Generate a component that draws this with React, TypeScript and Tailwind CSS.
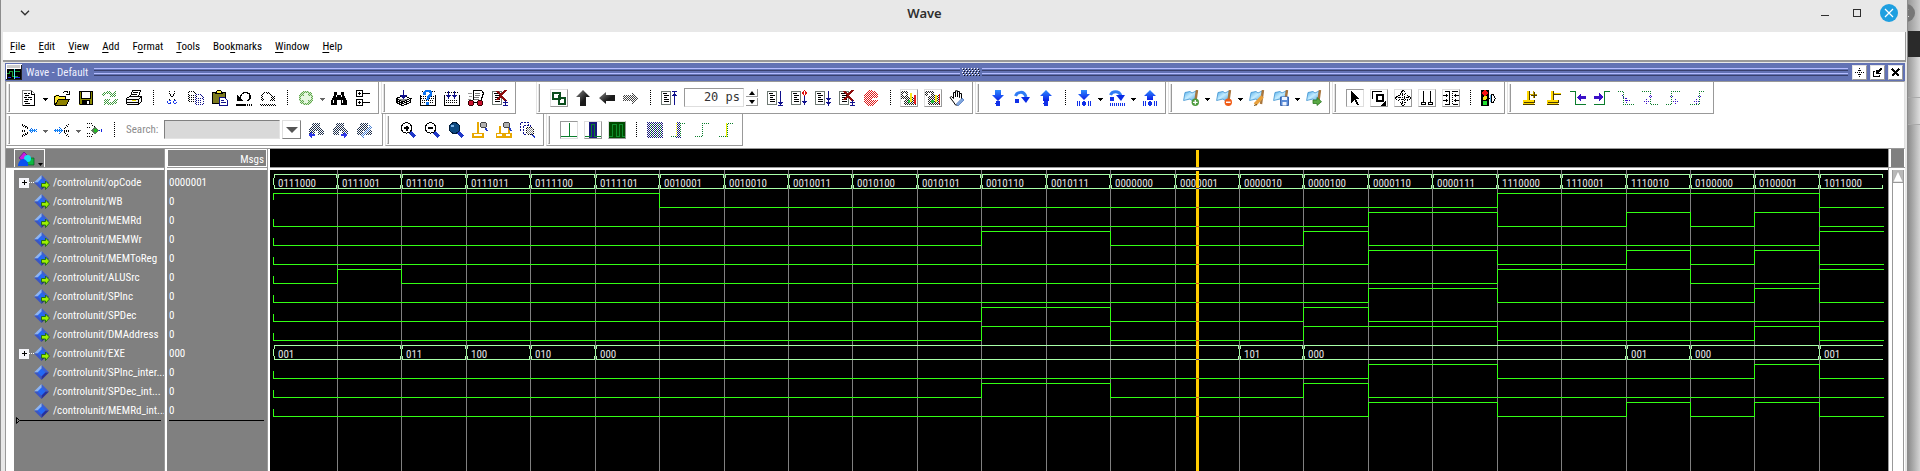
import React from 'react';

type Kids = { children?: React.ReactNode };

const FONT = "font-['Liberation_Sans_Narrow','Roboto_Condensed','Liberation_Sans',sans-serif]";

/* ---------- icon helpers ---------- */

const Svg = ({ children }: Kids) => (
  <svg viewBox="0 0 16 16" className="size-4 shrink-0" shapeRendering="crispEdges" fill="none">
    {children}
  </svg>
);
const L = ({ d, c = '#000', w = 1, f = 'none', dash }: { d: string; c?: string; w?: number; f?: string; dash?: string }) => (
  <path d={d} stroke={c} strokeWidth={w} fill={f} strokeDasharray={dash} />
);
const F = ({ d, c = '#000' }: { d: string; c?: string }) => <path d={d} fill={c} />;
const Dim = ({ children }: Kids) => <g mask="url(#dither)">{children}</g>;

const DARK_BLUE = '#10108c';
const GREEN = '#0a7d2c';

const SharedDefs = () => (
  <svg className="absolute size-0" aria-hidden="true">
    <defs>
      <pattern id="checker" width="2" height="2" patternUnits="userSpaceOnUse">
        <rect width="1" height="1" fill="#fff" />
        <rect x="1" y="1" width="1" height="1" fill="#fff" />
      </pattern>
      <mask id="dither" maskUnits="userSpaceOnUse" x="0" y="0" width="16" height="16">
        <rect width="16" height="16" fill="url(#checker)" />
      </mask>
      <linearGradient id="blueArrow" x1="0" y1="0" x2="0" y2="1">
        <stop offset="0" stopColor="#2f8cff" />
        <stop offset="1" stopColor="#0a1ee6" />
      </linearGradient>
      <linearGradient id="darkArrow" x1="0" y1="0" x2="1" y2="1">
        <stop offset="0" stopColor="#8a8a8a" />
        <stop offset=".6" stopColor="#1a1a1a" />
      </linearGradient>
      <linearGradient id="flag" x1="0" y1="0" x2="1" y2="1">
        <stop offset="0" stopColor="#4aa8e8" />
        <stop offset=".5" stopColor="#c4ecff" />
        <stop offset="1" stopColor="#58a8e0" />
      </linearGradient>
    </defs>
  </svg>
);

const Lines = ({ x = 0 }: { x?: number }) => (
  <g transform={`translate(${x} 0)`}>
    <L d="M.5 1.5H9.5V14.5H.5Z" c="#6f7a74" />
    <L d="M2 3.500H6M3 5.500H8M3 7.500H6M3 9.500H8M3 11.500H8" />
  </g>
);

const icons: Record<string, React.ReactNode> = {
  new: (
    <>
      <L d="M1.5 .5H10.5L13.5 3.5V15.5H1.5Z" c="#8a8a8a" />
      <L d="M10.5 1V4.5H13.5M13.5 4V15.5H2" />
      <L d="M3 3.5H6M7 3.5H9M4 5.5H8M3 7.5H6M7 7.5H11M4 9.5H8M9 9.5H11M3 11.5H7M4 13.5H9" />
    </>
  ),
  open: (
    <>
      <F d="M1 5H5V6H11V9H16L12 15H1Z" c="#ffe92e" />
      <F d="M4 9H16L12 15H1Z" c="#8d8100" />
      <L d="M.5 15V6.5H1.5L2.5 5.5H4.5L5.5 6.5H11.5V9M1 15.5H12L15.5 9.5H4.5L1 15M8.5 3.5L10.5 1.5H13L14.5 3.5M12 4.5H15.5V1" />
    </>
  ),
  save: (
    <>
      <F d="M1 1H15V15H1Z" c="#8b8a00" />
      <F d="M4 1H12V8H4Z" c="#fff" />
      <F d="M4 10H12V15H4Z" />
      <F d="M9 11H11V14H9Z" c="#fff" />
      <L d="M1.5 1.5H14.5V14.5H2.5L1.5 13.5Z" />
      <L d="M3.5 2V8.5H12.5V2" />
    </>
  ),
  refresh: (
    <Dim>
      <L d="M1 6C3 2 7 1 10 4M15 9C13 14 9 15 5 12" c="#3f9a3f" w={3} />
      <F d="M7 7H14V0ZM9 9H2V16Z" c="#3f9a3f" />
    </Dim>
  ),
  print: (
    <>
      <L d="M4.5 6.5L6.5 .5H14.5L12.5 6.5" f="#fff" />
      <L d="M7 2.5H12M6 4.5H11" />
      <L d="M.5 8.5L3.5 6.5H15.5V11.5L12.5 14.5H1.5L.5 13.5Z" f="#f4f4f4" />
      <L d="M.5 9.5H12.5L15.5 7M12.5 9.5V14M1 12.5H12" />
      <L d="M6 10.5H10" c="#e6d800" />
    </>
  ),
  cut: (
    <>
      <L d="M5.5 1V4L10.5 10M10.5 1V4L5.5 10" dash="1 1" />
      <L d="M4.5 10.5H6.5V13.5H3.5V11.5ZM9.5 10.5H11.5L12.5 13.5H9.5Z" c="#1838e8" dash="2 1" />
    </>
  ),
  copy: (
    <Dim>
      <L d="M0 1.5H6L8.5 4.5V11.5H.5ZM1 5.5H6M1 7.5H6M1 9.5H6" w={1.6} />
      <L d="M7.5 4.5H12L15.5 8.5V14.5H7.5ZM8 8.5H14M8 10.5H14M8 12.5H14" c={DARK_BLUE} w={1.6} />
    </Dim>
  ),
  paste: (
    <>
      <L d="M.5 2.5H13.5V13.5H.5Z" f="#7c7a1e" />
      <L d="M3.5 3.5L5.5 .5H8.5L10.5 3.5Z" f="#ffee44" />
      <L d="M7.5 7.5H12.5L15.5 10.5V15.5H7.5Z" c={DARK_BLUE} f="#fff" />
      <L d="M9 10.5H12M9 12.5H14" c={DARK_BLUE} />
    </>
  ),
  undo: (
    <>
      <L d="M4 7.5C5 3.5 8 2.5 10.5 2.5C15 3.5 15.5 9.5 11.5 10.5" w={1.4} />
      <F d="M1 5V11H7Z" />
      <L d="M0 14.5H10" w={2} />
      <L d="M11 14.5H16" w={2} dash="1 1" />
    </>
  ),
  redo: (
    <Dim>
      <L d="M12 7.5C11 3.5 8 2.5 5.5 2.5C1 3.5 .5 9.5 4.5 10.5" w={1.8} />
      <F d="M15 5V11H9Z" />
      <L d="M0 14.5H16" w={2} />
    </Dim>
  ),
  add: (
    <>
      <circle cx="8" cy="8" r="7.4" fill="#cfe8c8" />
      <Dim>
        <circle cx="8" cy="8" r="7.4" fill="#5fa84a" />
      </Dim>
      <F d="M6 3H10V6H13V10H10V13H6V10H3V6H6Z" c="#e6f7e0" />
    </>
  ),
  find: (
    <>
      <F d="M3 2H6V5H10V2H13V5L16 11V15H10V10H6V15H0V11L3 5Z" />
      <L d="M2.5 10V13M5.5 5V7M11.5 10V13M10.5 5V7" c="#fff" />
    </>
  ),
  tree: (
    <>
      <L d="M1.5 .5H7.5V6.5H1.5ZM1.5 9.5H7.5V15.5H1.5ZM8 3.5H15M8 12.5H15" />
      <L d="M3 3.5H6M4.5 2V5M3 12.5H6M4.5 11V14" />
    </>
  ),
  stack: (
    <>
      <L d="M.5 8.5L7 5.5L14.5 8.5L6.5 12Z" f="#fff" />
      <L d="M.5 10.5L6.5 13.5L14.5 10.5M.5 12.5L6.5 15.5L14.5 12.5M.5 9V13M14.5 9V13" />
      <L d="M3 9.5H11M5 10.5H9" c="#888" />
      <L d="M7.5 0V8" c={DARK_BLUE} w={1.4} />
      <F d="M4 5H11L7.5 9Z" c={DARK_BLUE} />
    </>
  ),
  help: (
    <>
      <L d="M.5 5V15.5H15.5V5" />
      <L d="M2 12.500H14M2 10.500H14" dash="1 1" />
      <L d="M1 6.5H15M1 8.5H15M2 1.5H15" dash="1 1" />
      <L d="M4.5 5V3C5 0 11 0 11 3.5C11 6 7.5 6 7.5 10" c="#0a72f0" w={2.6} />
      <F d="M6 12H9V15H6Z" c="#0a72f0" />
    </>
  ),
  compileAll: (
    <>
      <L d="M.5 5V15.5H15.5V5" />
      <L d="M2 10.5H14M2 12.5H14M1 2.5H15" dash="1 1" />
      <L d="M4.5 1V7M10.5 1V7" c={DARK_BLUE} />
      <F d="M2 5H7L4.5 9ZM8 5H13L10.5 9Z" c={DARK_BLUE} />
    </>
  ),
  simulate: (
    <>
      <L d="M5.5 .5H13.5L15.5 3L12.5 12H4.5L5.5 8Z" f="#fff" />
      <L d="M7 3.5H12M7 5.5H12M6 7.5H11M6 9.5H11" c="#777" />
      <L d="M0 3.5H4M1 6.5H4M0 9.5H3" c="#999" />
      <circle cx="3" cy="13" r="2.6" fill="#c8102e" stroke="#300" />
      <circle cx="12" cy="13" r="2.6" fill="#c8102e" stroke="#300" />
    </>
  ),
  breakRun: (
    <>
      <Lines />
      <L d="M5 1L14 11M14 0L5 10" c="#8c0c0c" w={2} />
      <L d="M13.5 10V15M11 15.5H16M11 12.5H16" c={DARK_BLUE} />
    </>
  ),
  layers: (
    <>
      <path d="M2 2.5H9V8.5H2ZM7.5 7.5H14V13.5H7.5Z" stroke="#0a4d1c" strokeWidth="2" />
      <L d="M5 8L11 8M7.5 5V11" c="#0a4d1c" />
    </>
  ),
  up: <path d="M8 0L15 7H11V16H5V7H1Z" fill="url(#darkArrow)" shapeRendering="auto" />,
  left: <path d="M0 8L7 2V5H16V11H7V14Z" fill="url(#darkArrow)" shapeRendering="auto" />,
  right: (
    <Dim>
      <F d="M16 8L9 2V5H0V11H9V14Z" c="#444" />
    </Dim>
  ),
  restart: (
    <>
      <Lines />
      <L d="M13.5 3V15M11 1.5H16M11 5.5H16" c={DARK_BLUE} />
      <F d="M11 6L13.5 2L16 6Z" c={DARK_BLUE} />
    </>
  ),
  run: (
    <>
      <Lines />
      <L d="M13.5 1V15M11 15.5H16" c={DARK_BLUE} />
      <F d="M11 12H16L13.5 15Z" c={DARK_BLUE} />
    </>
  ),
  runNext: (
    <>
      <Lines />
      <L d="M13.5 .5L15.5 3L13.5 5.5L11.5 3Z" c="#e01010" />
      <L d="M13.5 6V15" c={DARK_BLUE} />
      <F d="M11 11H16L13.5 15Z" c={DARK_BLUE} />
    </>
  ),
  runAll: (
    <>
      <Lines />
      <L d="M13.5 1V15" c={DARK_BLUE} />
      <F d="M11 8H16L13.5 11ZM11 12H16L13.5 16Z" c={DARK_BLUE} />
    </>
  ),
  stop: (
    <Dim>
      <path d="M5 1H10L14 4V7H8V10H14V12L10 15H5L1 11V5Z" fill="#e01a1a" />
      <path d="M5 1H10L14 4V7H8V10H14V12L10 15H5L1 11V5Z" stroke="#e01a1a" strokeWidth="1" />
    </Dim>
  ),
  mem: (
    <>
      <Dim>
        <F d="M0 1H7V9H0ZM4 7H15V15H3Z" c="#222" />
      </Dim>
      <L d="M9.5 3V12" c="#f5ea1a" w={2} />
      <L d="M13.5 5V14" c="#e81c1c" w={2} />
      <F d="M7 10H9V13H7Z" c="#20c040" />
      <F d="M2 3H5V6H2Z" c="#fff" />
    </>
  ),
  profile: (
    <>
      <Dim>
        <F d="M0 1H9V6H0ZM3 5H15V15H3Z" c="#222" />
      </Dim>
      <L d="M10.5 5V12" c="#f5ea1a" w={2} />
      <L d="M14.5 4V14" c="#e81c1c" />
      <F d="M6 10H9V13H6Z" c="#20c040" />
      <F d="M3 3H6V6H3Z" c="#fff" />
    </>
  ),
  hand: (
    <>
      <path d="M4.5 12L1 7.5L2.5 6.5L4.5 8.5V2.5H6.5V7V.8H8.5V7V1.5H10.5V7.5V3.5H12.5V10L11 13L9 15H6.5Z" fill="#fff" stroke="#000" shapeRendering="auto" />
      <path d="M7 14L13 8L15 10L9 16Z" fill="#7fa6de" stroke="#5c7fc0" strokeWidth=".6" />
    </>
  ),
  stepInto: (
    <>
      <path d="M5 0H11V5H14L8 11L2 5H5Z" fill="url(#blueArrow)" shapeRendering="auto" />
      <circle cx="8" cy="13.5" r="2.5" fill="#1030e8" />
    </>
  ),
  stepOver: (
    <>
      <path d="M1.5 6C3 2 10 0 12 7" stroke="#2f7cf5" strokeWidth="3" shapeRendering="auto" />
      <path d="M7 7H16L12 13Z" fill="#0a2be6" shapeRendering="auto" />
      <circle cx="3" cy="11" r="2.4" fill="#1030e8" />
    </>
  ),
  stepOut: (
    <>
      <path d="M8 0L14 6H11V11H5V6H2Z" fill="url(#blueArrow)" shapeRendering="auto" />
      <circle cx="8" cy="13.5" r="2.5" fill="#1030e8" />
    </>
  ),
  stepIntoInst: (
    <>
      <path d="M5 0H11V4H14L8 10L2 4H5Z" fill="url(#blueArrow)" shapeRendering="auto" />
      <circle cx="8" cy="13.5" r="2.3" fill="#1030e8" />
      <L d="M1.5 11V16M3.5 11V16M12.5 11V16M14.5 11V16" c="#1030e8" />
    </>
  ),
  stepOverInst: (
    <>
      <path d="M1.5 5C3 1 10 0 12 6" stroke="#2f7cf5" strokeWidth="3" shapeRendering="auto" />
      <path d="M7 5H16L12 11Z" fill="#0a2be6" shapeRendering="auto" />
      <circle cx="3" cy="9" r="2.4" fill="#1030e8" />
      <L d="M1 14.5H16" c="#1030e8" w={3} dash="1 1" />
    </>
  ),
  stepOutInst: (
    <>
      <path d="M8 0L14 6H11V10H5V6H2Z" fill="url(#blueArrow)" shapeRendering="auto" />
      <circle cx="8" cy="13.5" r="2.3" fill="#1030e8" />
      <L d="M1.5 11V16M3.5 11V16M12.5 11V16M14.5 11V16" c="#1030e8" />
    </>
  ),
  selectArrow: <F d="M4 1L12 9H9L12 15H10L7.5 10L5 12L4 13Z" />,
  zoomBox: (
    <>
      <L d="M1.5 9V1.5H11" w={1.4} />
      <path d="M5.5 5H11.500V11H5.5Z" stroke="#000" strokeWidth="2" />
      <F d="M15 10V16H9Z" />
    </>
  ),
  pan: (
    <>
      <L d="M7.500 1V15M1 7.500H15" dash="1 1" />
      <L d="M9.500 4V12M4 9.500H12" dash="1 1" />
      <L d="M5 4L8 .5L11 4ZM5 12L8 15.5L11 12ZM4 5L.5 8L4 11ZM12 5L15.5 8L12 11Z" dash="1 1" />
    </>
  ),
  twoCursors: <L d="M4.5 1V11.5M11.5 1V11.5M2.5 12.5H6.5V14.5H2.5ZM9.5 12.5H13.5V14.5H9.5Z" />,
  edgePair: (
    <>
      <L d="M2 1.5H6.5V14.5H2M14.5 1.5H10M14.5 14.5H10" />
      <L d="M9.5 1V15" dash="1 1" />
      <L d="M0 5.5H5M0 10.5H5M11 5.5H16M11 10.5H16M3.500 4V7M3.500 9V12M12.500 4V7M12.500 9V12" />
    </>
  ),
  traffic: (
    <>
      <F d="M0 0H8V16H0Z" />
      <circle cx="4" cy="3" r="2.6" fill="#f81010" />
      <circle cx="4" cy="8" r="2" fill="#f6e71c" />
      <circle cx="4" cy="13" r="2.2" fill="#20e030" />
      <L d="M8 8.5H10M10.5 4.5H12L14.5 8.5L12 12.5H10.5Z" />
      <L d="M9.5 5V12" c="#6ab8f0" />
    </>
  ),
  cursorAdd: (
    <>
      <L d="M6 1V11" c="#ffd800" w={2} />
      <L d="M7.500 1V11" c="#4a3c00" />
      <F d="M1 10H12V14H1Z" c="#ffd800" />
      <L d="M2 12.500H12.500V10M1 14.500H12.500" c="#4a3c00" />
      <L d="M8 4.500H15M11.500 1V8" c="#c8a400" />
      <L d="M9 5.500H15M12.500 2V8" c="#4a3c00" />
    </>
  ),
  cursorDel: (
    <>
      <L d="M6 1V11" c="#ffd800" w={2} />
      <L d="M7.500 1V11" c="#4a3c00" />
      <F d="M1 10H12V14H1Z" c="#ffd800" />
      <L d="M2 12.500H12.500V10M1 14.500H12.500" c="#4a3c00" />
      <L d="M8 3.500H15" c="#ffd800" />
      <L d="M8 4.500H15" c="#4a3c00" />
    </>
  ),
  prevFall: (
    <>
      <L d="M0 1.5H5.5V14.5H16" c={GREEN} w={1.4} />
      <F d="M7 7L11 3V6H16V9H11V12Z" c="#3a10c8" />
    </>
  ),
  nextRise: (
    <>
      <L d="M0 14.5H10.5V1.5H16" c={GREEN} w={1.4} />
      <F d="M9 7L5 3V6H0V9H5V12Z" c="#3a10c8" />
    </>
  ),
  edge1: (
    <>
      <L d="M0 1.5H5.5V14.5H16" c={GREEN} dash="1 1" />
      <L d="M4 5.5L6 7.5L8 9.5M8.5 8V13M7 10.5H12" c="#3a10c8" dash="1 1" />
    </>
  ),
  edge2: (
    <>
      <L d="M0 1.5H8.5V14.5H16" c={GREEN} dash="1 1" />
      <L d="M2 11.5H8M4.5 9V14M7 6.5H11M8.5 5V9" c="#3a10c8" dash="1 1" />
    </>
  ),
  edge3: (
    <>
      <L d="M0 14.5H5.5V1.5H15" c={GREEN} dash="1 1" />
      <L d="M4 6.5H8M7 11.5H12M9.5 9V14" c="#3a10c8" dash="1 1" />
    </>
  ),
  edge4: (
    <>
      <L d="M0 14.5H9.5V1.5H15" c={GREEN} dash="1 1" />
      <L d="M8 6.5H12M4 11.5H9M6.5 9V14" c="#3a10c8" dash="1 1" />
    </>
  ),
  zoomIn: (
    <>
      <L d="M10 10L15 15" c="#2038c8" w={3} />
      <circle cx="6.5" cy="6" r="5.2" fill="#fff" stroke="#000" />
      <L d="M4 6H9M6.5 3.5V8.5" w={2} />
    </>
  ),
  zoomOut: (
    <>
      <L d="M10 10L15 15" c="#2038c8" w={3} />
      <circle cx="6.5" cy="6" r="5.2" fill="#fff" stroke="#000" />
      <L d="M4 6H9" w={2} />
    </>
  ),
  zoomFull: (
    <>
      <L d="M10 10L15 15" c="#2038c8" w={3} />
      <circle cx="6.5" cy="6" r="5.4" fill="#0d4a82" stroke="#001c3a" />
      <F d="M3 3H6V5H3Z" c="#7db4e8" />
    </>
  ),
  zoomCursor: (
    <>
      <L d="M5.5 0V11" c="#e8a800" w={2} />
      <L d="M1 11.5H11V15H1Z" c="#e8a800" w={1.6} f="#fff" />
      <L d="M13 5L15 9" c="#2038c8" w={2} />
      <circle cx="11.5" cy="3" r="3" fill="#b0b0b0" stroke="#444" />
    </>
  ),
  zoomTwo: (
    <>
      <L d="M3.5 4V11M12.5 3V11" c="#e8a800" w={2} />
      <L d="M.5 11.5H7V15H.5ZM9 11.5H15V15H9Z" c="#e8a800" w={1.6} f="#fff" />
      <L d="M13 5L15 9" c="#2038c8" w={2} />
      <circle cx="10.5" cy="3" r="3" fill="#b0b0b0" stroke="#444" />
    </>
  ),
  zoomRegion: (
    <>
      <L d="M.5 .5H8.5V3M.5 .5V10M3.5 3.5H10V6M3.5 3.5V12H7" c={DARK_BLUE} dash="2 1" />
      <L d="M12 12L15 15.5" c="#2038c8" w={1.6} />
      <Dim>
        <circle cx="10" cy="9" r="4" fill="#888" stroke="#000" />
      </Dim>
    </>
  ),
  fmtLine: <L d="M8.5 1V15M0 14.5H16" c={GREEN} />,
  fmtPulse: (
    <>
      <F d="M4 0H12V16H4Z" c="#17187c" />
      <L d="M0 14.5H6.5V2.5H9.5V14.5H16" c={GREEN} w={1.4} />
    </>
  ),
  fmtFull: (
    <>
      <F d="M0 0H16V16H0Z" c="#004a00" />
      <L d="M0 14.5H3.5V2.5H7.5V14.5H10.5V2.5H13.5V14.5H16" c="#0f8f2c" w={1.4} />
    </>
  ),
  expand1: (
    <Dim>
      <F d="M0 0H16V16H0Z" c="#17187c" />
      <L d="M3.500 15V2.500H6.500V15M10.500 15V2.500H13.500V15" c={GREEN} />
    </Dim>
  ),
  expand2: (
    <>
      <Dim>
        <F d="M5 0H10V16H5Z" c="#17187c" />
      </Dim>
      <L d="M5.5 1V15" c="#f0f000" dash="1 1" />
      <L d="M0 14.5H5M9.5 14V1.5H15" c={GREEN} dash="1 1" />
    </>
  ),
  expand3: <L d="M0 14.5H7.5V1.5H15" c={GREEN} dash="1 1" />,
  expand4: (
    <>
      <L d="M7.5 1V15" c="#f0f000" />
      <L d="M0 14.5H8.5V1.5H15" c={GREEN} dash="1 1" />
    </>
  ),
  mergeLeft: (
    <>
      <L d="M1 2.5L7 6.5M1 8.5H5M1 14.5L7 10.5" w={2} dash="1 1" />
      <Dim>
        <F d="M7 8.5L11 5V7H16V10H11V12Z" c="#006cf0" />
      </Dim>
      <L d="M8 8.5H15" c="#1c8cf8" />
    </>
  ),
  mergeRight: (
    <>
      <Dim>
        <F d="M9 8.5L5 5V7H0V10H5V12Z" c="#006cf0" />
      </Dim>
      <L d="M1 8.5H8" c="#1c8cf8" />
      <L d="M15 2.5L10 6.5M15 8.5H10M15 14.5L10 10.5" w={2} dash="1 1" />
    </>
  ),
  mergeMid: (
    <>
      <L d="M0 1.5H4L7 5M0 5.5H4M0 11.5H4M0 14.5H4L7 12" w={1.6} dash="1 1" />
      <F d="M4 8.5L8 4L12 8.5L8 13Z" c="#5a7a5a" />
      <F d="M7 7H10V10H7Z" c="#20c020" />
      <L d="M12 8.5H16M14.5 7V11" c="#1020e0" dash="1 1" />
    </>
  ),
};

const Binocular = ({ kind }: { kind: 'prev' | 'next' | 'options' }) => (
  <Svg>
    <Dim>
      <F d="M4 1H12V4L16 9V13H10V9H7V13H1V8L4 4Z" c="#20304c" />
      {kind === 'options' && <L d="M15 4L6 15" c="#4a80d0" w={3} />}
    </Dim>
    {kind === 'prev' && <F d="M0 13L4 10V12H7V14H4V16Z" c="#3038e8" />}
    {kind === 'next' && <F d="M16 13L12 10V12H9V14H12V16Z" c="#3038e8" />}
  </Svg>
);

const FlagIcon = ({ badge }: { badge: 'add' | 'remove' | 'edit' | 'save' | 'go' }) => (
  <svg viewBox="0 0 16 16" className="size-4 shrink-0" fill="none">
    <path d="M2 2.500L7 1.500L9 3L13 1V9L9 10.500L7 9L.6 10.500Z" fill="url(#flag)" stroke="#3d92cf" strokeWidth=".8" />
    <path d="M14 0L12 14" stroke="#a8763e" strokeWidth="2.400" />
    {badge === 'add' && (
      <>
        <circle cx="12.3" cy="12.3" r="3.7" fill="#4c9a3c" />
        <path d="M12.300 10V14.6M10 12.300H14.600" stroke="#fff" strokeWidth="1.3" />
      </>
    )}
    {badge === 'remove' && (
      <>
        <circle cx="12.3" cy="12.3" r="3.7" fill="#f05a14" />
        <path d="M10 12.300H14.600" stroke="#fff" strokeWidth="1.5" />
      </>
    )}
    {badge === 'edit' && (
      <>
        <path d="M6 14.500L13.500 6.500" stroke="#e8a03c" strokeWidth="3.500" />
        <path d="M5 15.500L8 14.500" stroke="#705020" />
      </>
    )}
    {badge === 'save' && (
      <>
        <path d="M7.500 7H15.500V15.500H7.500Z" fill="#5a8cd8" stroke="#3c66b0" />
        <path d="M9 7H14V10H9ZM9.500 12H13.500V15.500H9.500Z" fill="#eef4ff" />
      </>
    )}
    {badge === 'go' && <path d="M7 10H11V7.500L15.500 11.700L11 15.500V13.500H7Z" fill="#5aa844" stroke="#2f7a24" strokeWidth=".8" />}
  </svg>
);

/* ---------- toolbar parts ---------- */

const Tool = ({ icon, label, frame, children }: { icon?: string; label: string; frame?: 'up' | 'down' } & Kids) => (
  <button type="button" aria-label={label} className="flex h-6 w-6 shrink-0 items-center justify-center">
    <span
      className={
        frame === 'up'
          ? 'border border-t-[#dedede] border-r-[#999] border-b-[#999] border-l-[#dedede]'
          : frame === 'down'
            ? 'border border-t-[#999] border-r-[#dedede] border-b-[#dedede] border-l-[#999]'
            : ''
      }
    >
      {icon ? <Svg>{icons[icon]}</Svg> : children}
    </span>
  </button>
);

const Caret = ({ dim }: { dim?: boolean }) => (
  <button type="button" aria-label="More" className="flex h-6 w-[9px] shrink-0 items-center justify-center pt-1">
    <svg viewBox="0 0 5 3" className="h-[3px] w-[5px]" shapeRendering="crispEdges">
      <path d="M0 0H5V1H4V2H3V3H2V2H1V1H0Z" fill={dim ? '#666' : '#000'} />
    </svg>
  </button>
);

const Sep = () => (
  <div className="flex w-[14px] shrink-0 justify-center">
    <svg viewBox="0 0 1 16" className="h-4 w-px" shapeRendering="crispEdges">
      <path d="M.5 0V16" stroke="#000" strokeDasharray="1 1" />
    </svg>
  </div>
);

const Group = ({ children, className = '' }: { className?: string } & Kids) => (
  <div className={`flex h-8 shrink-0 items-center border-r border-b border-l border-r-[#999] border-b-[#999] border-l-[#e4e4e4] pr-[3px] ${className}`}>
    <div className="mr-[7px] ml-px h-7 w-[2px] border-r border-b border-l border-[#999] border-l-[#e4e4e4]" />
    {children}
  </div>
);

/* ---------- waveform data ---------- */

type Signal = { name: string; value: string; bus?: [number, string][]; high?: [number, number][]; internal?: boolean };

const OPCODES =
  '0111000 0111001 0111010 0111011 0111100 0111101 0010001 0010010 0010011 0010100 0010101 0010110 0010111 0000000 0000001 0000010 0000100 0000110 0000111 1110000 1110001 1110010 0100000 0100001 1011000'.split(' ');

const SIGNALS: Signal[] = [
  { name: '/controlunit/opCode', value: '0000001', bus: OPCODES.map((v, i) => [i, v]) },
  { name: '/controlunit/WB', value: '0', high: [[0, 6], [19, 24]] },
  { name: '/controlunit/MEMRd', value: '0', high: [[17, 19], [21, 22], [23, 24]] },
  { name: '/controlunit/MEMWr', value: '0', high: [[11, 13], [16, 17], [24, 25]] },
  { name: '/controlunit/MEMToReg', value: '0', high: [[17, 19], [21, 22], [23, 24]] },
  { name: '/controlunit/ALUSrc', value: '0', high: [[1, 2], [19, 22], [24, 25]] },
  { name: '/controlunit/SPInc', value: '0', high: [[17, 19], [23, 24]] },
  { name: '/controlunit/SPDec', value: '0', high: [[11, 13], [16, 17]] },
  { name: '/controlunit/DMAddress', value: '0', high: [[11, 13], [16, 19], [23, 24]] },
  {
    name: '/controlunit/EXE',
    value: '000',
    bus: [[0, '001'], [2, '011'], [3, '100'], [4, '010'], [5, '000'], [15, '101'], [16, '000'], [21, '001'], [22, '000'], [24, '001']],
  },
  { name: '/controlunit/SPInc_inter...', value: '0', high: [[17, 19], [23, 24]], internal: true },
  { name: '/controlunit/SPDec_int...', value: '0', high: [[11, 13], [16, 17]], internal: true },
  { name: '/controlunit/MEMRd_int...', value: '0', high: [[17, 19], [21, 22], [23, 24]], internal: true },
];

const LAST = 25;
const px = (k: number) => Math.floor(3 + 64.43 * k);
const ROW = 19;

const logicPath = (high: [number, number][], row: number) => {
  const hi = 4.5 + row * ROW;
  const lo = hi + 14;
  const startsHigh = high[0][0] === 0;
  let d = startsHigh ? `M3.5 ${hi + 6.5}V${hi}` : `M3.5 ${lo - 7.5}V${lo}`;
  for (const [a, b] of high) {
    if (a > 0) d += `H${px(a) + 0.5}V${hi}`;
    d += `H${px(b) + 0.5}`;
    if (b < LAST) d += `V${lo}`;
  }
  return d + `H${px(LAST) + 1}`;
};

const busPath = (bus: [number, string][], row: number) => {
  const hi = 4.5 + row * ROW;
  const lo = hi + 14;
  let d = '';
  bus.forEach(([k], i) => {
    const a = px(k);
    const end = i + 1 < bus.length ? bus[i + 1][0] : LAST;
    const b = px(end);
    d += `M${a + 1} ${hi}H${b}M${a + 1} ${lo}H${b}`;
    d += `M${a + 1.5} ${hi}v3.500M${a + 1.5} ${lo}v-3.500M${a + 0.5} ${hi + 3.5}V${lo - 3.5}`;
    if (end < LAST || row === 0) d += `M${b - 0.5} ${hi}v3.500M${b - 0.5} ${lo}v-3.500`;
  });
  return d;
};

const Waves = () => (
  <svg width="1617" height="301" className={`block ${FONT}`} shapeRendering="crispEdges" fill="none" role="img" aria-label="Waveforms">
    {Array.from({ length: 24 }, (_, i) => (
      <path key={i} d={`M${px(i + 1) + 0.5} 0V301`} stroke="#808080" />
    ))}
    {SIGNALS.map((s, row) =>
      s.bus ? (
        <g key={row}>
          <path d={busPath(s.bus, row)} stroke="#a8ffa8" />
          {s.bus.map(([k, v]) => (
            <text key={k} x={px(k) + 5} y={17 + row * ROW} fontSize="11" fill="#e6e6e6">
              {v}
            </text>
          ))}
        </g>
      ) : (
        <path key={row} d={logicPath(s.high ?? [], row)} stroke="#33ff14" />
      )
    )}
    <path d="M927.500 1V301" stroke="#ffcc00" strokeWidth="3" />
    {SIGNALS.map((s, row) => (
      <path key={row} d={`M926 ${18.5 + row * ROW}h3`} stroke={s.bus ? '#5a3ca0' : '#d84a14'} />
    ))}
  </svg>
);

const Diamond = ({ out }: { out: boolean }) => (
  <svg viewBox="0 0 16 16" className="size-4 shrink-0">
    <path d="M7.500 0L15 7.500H7.500Z" fill="#3c5fd0" />
    <path d="M7.500 0V7.500H0Z" fill="#8db4f4" />
    <path d="M0 7.500H7.500V15Z" fill="#3a55c4" />
    <path d="M15 7.500H7.500V15Z" fill="#26309c" />
    <path d="M7.500 3.500L11.500 7.500L7.500 11.500L3.500 7.500Z" fill="#2468f4" />
    {out && <path d="M7.500 8.500H11.500V6L15.500 10L11.500 14.500V12H7.500Z" fill="#9cf000" stroke="#1d6a10" strokeWidth=".9" />}
  </svg>
);

const MENUS: [string, number][] = [['File', 0], ['Edit', 0], ['View', 0], ['Add', 0], ['Format', 1], ['Tools', 0], ['Bookmarks', 3], ['Window', 0], ['Help', 0]];

const PaneButton = ({ label, d, dash }: { label: string; d: string; dash?: string }) => (
  <button type="button" aria-label={label} className="flex h-[15px] w-[15px] items-center justify-center border border-t-[#e4e4e4] border-r-[#999] border-b-[#999] border-l-[#e4e4e4] bg-white">
    <svg viewBox="0 0 9 9" className="size-[9px]" shapeRendering="crispEdges" fill="none">
      <path d={d} stroke="#000" strokeWidth="1.500" strokeDasharray={dash} />
    </svg>
  </button>
);

const HeaderRule = () => <div className="h-[3px] shrink-0 border-t border-[#999] bg-white" />;

const Groove = ({ className = '' }: { className?: string }) => (
  <div className={`flex flex-1 flex-col gap-[2px] ${className}`}>
    <div className="h-[3px] border-t border-b border-t-[#b4bcff] border-b-[#38406e]" />
    <div className="h-[3px] border-t border-b border-t-[#b4bcff] border-b-[#38406e]" />
  </div>
);

export default function App() {
  return (
    <div className={`flex min-h-screen overflow-hidden bg-[#d8d8d8] text-[11px] leading-[19px] text-black ${FONT}`}>
      <SharedDefs />
      <div className="flex min-w-0 flex-1 flex-col border-r border-l border-[#8c8c8c] bg-[#e8e8e8]">
        <header className="flex h-8 shrink-0 items-center pr-[9px] pl-[14px]">
          <button type="button" aria-label="Window menu" className="flex w-5 justify-center pb-[6px]">
            <svg viewBox="0 0 10 6" className="h-[6px] w-[10px]" fill="none" stroke="#2e2e2e" strokeWidth="1.300">
              <path d="M1 .8L5 4.800L9 .8" />
            </svg>
          </button>
          <h1 className="flex-1 pr-[6px] pb-[6px] text-center font-['Noto_Sans',sans-serif] text-[13px] font-semibold text-[#2e2e2e]">Wave</h1>
          <div className="flex items-center gap-[22px] pb-[6px]">
            <button type="button" aria-label="Minimize" className="flex h-5 w-[10px] items-center justify-center">
              <span className="mt-[5px] h-px w-2 bg-[#2e2e2e]" />
            </button>
            <button type="button" aria-label="Maximize" className="flex h-5 w-[10px] items-center justify-center">
              <span className="size-2 border border-[#2e2e2e]" />
            </button>
            <button type="button" aria-label="Close" className="-ml-1 size-[18px]">
              <svg viewBox="0 0 18 18" className="size-[18px]" fill="none">
                <circle cx="9" cy="9" r="9" fill="#1e9fe0" />
                <path d="M5 5L13 13M13 5L5 13" stroke="#fff" strokeWidth="1.200" />
              </svg>
            </button>
          </div>
        </header>

        <nav className="mr-px mb-px ml-[2px] flex h-[30px] shrink-0 items-center gap-[13px] border-r border-b-2 border-[#999] bg-white pl-[7px]">
          {MENUS.map(([m, u]) => (
            <button type="button" key={m}>
              {m.slice(0, u)}
              <span className="underline underline-offset-2">{m[u]}</span>
              {m.slice(u + 1)}
            </button>
          ))}
        </nav>

        <section className="mr-[2px] ml-[4px] flex min-h-0 flex-1 flex-col">
          <div className="flex h-[18px] shrink-0 items-center bg-[#6272b4] pr-[2px] pl-px">
            <svg viewBox="0 0 16 16" className="size-4 shrink-0" shapeRendering="crispEdges" fill="none">
              <path d="M0 0H16V16H0Z" fill="#fff" />
              <path d="M1 5H15V15H1Z" fill="#000" />
              <path d="M1 1H14V4H1Z" fill="#ccc" />
              <path d="M1 9.500H3.500V7.500H6.500V12.500H12M9 7.500H14" stroke="#1a9c38" />
              <path d="M8.500 5V15" stroke="#4cf0f0" />
              <path d="M2 13.500H5M9 13.500H14" stroke="#2030e0" />
              <path d="M15.500 1V15.500H0" stroke="#222" />
            </svg>
            <h2 className="mr-[6px] ml-1 text-[#eef0ff]">Wave - Default</h2>
            <Groove />
            <svg viewBox="0 0 18 9" className="mx-[2px] h-[9px] w-[18px]" shapeRendering="crispEdges">
              {Array.from({ length: 4 }, (_, r) =>
                Array.from({ length: 6 }, (_, c) => (
                  <g key={`${r}-${c}`}>
                    <rect x={c * 3 + (r % 2)} y={r * 2} width="1" height="1" fill="#fff" />
                    <rect x={c * 3 + 1 + (r % 2)} y={r * 2 + 1} width="1" height="1" fill="#111" />
                  </g>
                ))
              )}
            </svg>
            <Groove className="mr-1" />
            <div className="flex gap-[3px]">
              <PaneButton label="Dock" d="M4.500 0V9M0 4.500H9M3 2.500H6M3 6.500H6" dash="1 1" />
              <PaneButton label="Undock" d="M8.500 .5L4 5M4 2V5.500H8M2 3.500H.7V8.300H6.500V7" />
              <PaneButton label="Close pane" d="M1 1L8 8M8 1L1 8" />
            </div>
          </div>

          <div className="border-t border-r border-b border-l border-t-[#999] border-r-[#e0e0e0] border-b-[#999] border-l-[#999] bg-white pb-[2px]">
            <div className="flex gap-[2px]">
              <Group>
                <Tool icon="new" label="New" />
                <Caret />
                <Tool icon="open" label="Open" />
                <Tool icon="save" label="Save" />
                <Tool icon="refresh" label="Reload" />
                <Tool icon="print" label="Print" />
                <Sep />
                <Tool icon="cut" label="Cut" />
                <Tool icon="copy" label="Copy" />
                <Tool icon="paste" label="Paste" />
                <Tool icon="undo" label="Undo" />
                <Tool icon="redo" label="Redo" />
                <Sep />
                <Tool icon="add" label="Add selected" />
                <Caret dim />
                <Tool icon="find" label="Find" />
                <Tool icon="tree" label="Expand" />
              </Group>
              <Group>
                <Tool icon="stack" label="Compile" />
                <Tool icon="help" label="Compile out-of-date" />
                <Tool icon="compileAll" label="Compile all" />
                <Tool icon="simulate" label="Simulate" />
                <Tool icon="breakRun" label="Break" />
              </Group>
              <Group className="ml-[18px]">
                <Tool icon="layers" label="Environment" frame="up" />
                <Tool icon="up" label="Up" />
                <Tool icon="left" label="Back" />
                <Tool icon="right" label="Forward" />
                <Sep />
                <Tool icon="restart" label="Restart" />
                <input
                  aria-label="Run length"
                  defaultValue="20 ps"
                  className="ml-[3px] h-[19px] w-[60px] border border-t-[#999] border-r-[#dedede] border-b-[#dedede] border-l-[#999] bg-white pr-[3px] text-right font-['DejaVu_Sans_Mono',monospace] text-[12px] text-[#333] outline-none"
                />
                <div className="mr-[5px] ml-[2px] flex w-3 flex-col gap-px">
                  {['M3 0L6 4H0Z', 'M0 0H6L3 4Z'].map((d, i) => (
                    <button type="button" key={d} aria-label={i ? 'Decrease' : 'Increase'} className="flex h-2 items-center justify-center border-r border-b border-[#999]">
                      <svg viewBox="0 0 6 4" className="h-1 w-[6px]">
                        <path d={d} />
                      </svg>
                    </button>
                  ))}
                </div>
                <Tool icon="run" label="Run" />
                <Tool icon="runNext" label="Continue run" />
                <Tool icon="runAll" label="Run all" />
                <Tool icon="breakRun" label="Break run" />
                <Tool icon="stop" label="Stop" />
                <Sep />
                <Tool icon="mem" label="Performance profiling" frame="up" />
                <Tool icon="profile" label="Memory profiling" frame="up" />
                <Tool icon="hand" label="Edit breakpoints" />
              </Group>
              <Group>
                <Tool icon="stepInto" label="Step into" />
                <Tool icon="stepOver" label="Step over" />
                <Tool icon="stepOut" label="Step out" />
                <Sep />
                <Tool icon="stepIntoInst" label="Step into instance" />
                <Caret />
                <Tool icon="stepOverInst" label="Step over instance" />
                <Caret />
                <Tool icon="stepOutInst" label="Step out instance" />
              </Group>
              <Group>
                <Tool label="Add bookmark"><FlagIcon badge="add" /></Tool>
                <Caret />
                <Tool label="Delete bookmarks"><FlagIcon badge="remove" /></Tool>
                <Caret />
                <Tool label="Manage bookmarks"><FlagIcon badge="edit" /></Tool>
                <Tool label="Save bookmarks"><FlagIcon badge="save" /></Tool>
                <Caret />
                <Tool label="Jump to bookmark"><FlagIcon badge="go" /></Tool>
              </Group>
              <Group>
                <Tool icon="selectArrow" label="Select mode" frame="down" />
                <Tool icon="zoomBox" label="Zoom mode" frame="up" />
                <Tool icon="pan" label="Pan mode" frame="up" />
                <Tool icon="twoCursors" label="Two cursor mode" frame="up" />
                <Tool icon="edgePair" label="Edit mode" frame="up" />
                <Sep />
                <Tool icon="traffic" label="Stop drawing" />
              </Group>
              <Group>
                <Tool icon="cursorAdd" label="Insert cursor" />
                <Tool icon="cursorDel" label="Delete cursor" />
                <Tool icon="prevFall" label="Previous transition" />
                <Tool icon="nextRise" label="Next transition" />
                <Tool icon="edge1" label="Previous falling edge" />
                <Tool icon="edge2" label="Next falling edge" />
                <Tool icon="edge3" label="Previous rising edge" />
                <Tool icon="edge4" label="Next rising edge" />
              </Group>
            </div>
            <div className="flex gap-[2px]">
              <Group>
                <Tool icon="mergeLeft" label="Causality" />
                <Caret dim />
                <Tool icon="mergeRight" label="Drivers" />
                <Caret dim />
                <Tool icon="mergeMid" label="Readers" />
                <Sep />
                <label htmlFor="search" className="ml-[5px] w-[38px] text-[#8c8c8c]">Search:</label>
                <input id="search" className="h-[19px] w-[116px] border border-t-[#808080] border-r-[#e4e4e4] border-b-[#e4e4e4] border-l-[#808080] bg-[#d9d9d9] outline-none" />
                <button type="button" aria-label="Search history" className="mr-[3px] ml-[2px] flex h-[19px] w-[19px] items-center justify-center border border-t-[#dedede] border-r-[#808080] border-b-[#808080] border-l-[#dedede]">
                  <svg viewBox="0 0 12 6" className="h-[6px] w-3">
                    <path d="M0 0H12L6 6Z" fill="#555" />
                  </svg>
                </button>
                <Tool label="Search reverse"><Binocular kind="prev" /></Tool>
                <Tool label="Search forward"><Binocular kind="next" /></Tool>
                <Tool label="Search options"><Binocular kind="options" /></Tool>
                <div className="w-[3px]" />
              </Group>
              <Group>
                <Tool icon="zoomIn" label="Zoom in" />
                <Tool icon="zoomOut" label="Zoom out" />
                <Tool icon="zoomFull" label="Zoom full" />
                <Tool icon="zoomCursor" label="Zoom to cursor" />
                <Tool icon="zoomTwo" label="Zoom between cursors" />
                <Tool icon="zoomRegion" label="Zoom other window" />
              </Group>
              <Group>
                <Tool icon="fmtLine" label="Expanded time off" frame="down" />
                <Tool icon="fmtPulse" label="Expanded time deltas" frame="up" />
                <Tool icon="fmtFull" label="Expanded time events" frame="up" />
                <Sep />
                <Tool icon="expand1" label="Expand all time" />
                <Tool icon="expand2" label="Expand time at cursor" />
                <Tool icon="expand3" label="Collapse all time" />
                <Tool icon="expand4" label="Collapse time at cursor" />
              </Group>
            </div>
          </div>

          <main className="flex min-h-0 flex-1 border-l border-[#999] bg-white">
            {/* signal names */}
            <div className="flex w-[158px] shrink-0 flex-col">
              <div className="flex h-[18px] shrink-0 bg-[#808080] pl-2">
                <button type="button" aria-label="Signal filter" className="flex w-[31px] items-end gap-[3px] border-t border-r border-l border-white pb-px pl-[3px]">
                  <svg viewBox="0 0 17 14" className="h-[14px] w-[17px]">
                    <path d="M6 0L12 6L6 10L1 6Z" fill="#c81ee0" stroke="#5c1080" strokeWidth=".7" />
                    <path d="M9 6H16V13H9Z" fill="#10b840" stroke="#075c20" strokeWidth=".7" />
                    <circle cx="9.500" cy="6.500" r="3.500" fill="#18e0f0" />
                    <path d="M5 7C8 7 11 11 10 14H0C0 11 2 7 5 7Z" fill="#0a50f0" />
                  </svg>
                  <svg viewBox="0 0 5 3" className="h-[3px] w-[5px]"><path d="M0 0H5L2.500 3Z" /></svg>
                </button>
              </div>
              <HeaderRule />
              <div className="flex flex-1 pl-2">
                <div className="min-w-0 flex-1 bg-[#808080] pt-[3px]">
                  {SIGNALS.map((s) => (
                    <div key={s.name} className="flex h-[19px] items-center pl-[5px] whitespace-nowrap text-white">
                      <div className="flex w-[15px] shrink-0 items-center">
                        {s.bus && (
                          <>
                            <button type="button" aria-label={`Expand ${s.name}`} className="flex size-[10px] items-center justify-center bg-[#f6f6fa]">
                              <svg viewBox="0 0 5 5" className="size-[5px]" shapeRendering="crispEdges">
                                <path d="M2.500 0V5M0 2.500H5" stroke="#000" />
                              </svg>
                            </button>
                            <span className="h-px flex-1 border-t border-dotted border-white" />
                          </>
                        )}
                      </div>
                      <Diamond out={!s.internal} />
                      <span className="ml-[3px]">{s.name}</span>
                    </div>
                  ))}
                  <div className="mr-[3px] ml-[2px] flex h-px items-center">
                    <svg viewBox="0 0 4 7" className="h-[7px] w-1 shrink-0" fill="none" stroke="#000">
                      <path d="M.5 .5L3.500 3.500L.5 6.500Z" />
                    </svg>
                    <div className="h-px flex-1 bg-black" />
                  </div>
                </div>
              </div>
            </div>
            <div className="w-[3px] shrink-0 border-l border-[#999] bg-white" />

            {/* values at cursor */}
            <div className="flex w-[100px] shrink-0 flex-col">
              <div className="h-[18px] shrink-0 border border-white bg-[#808080] pr-[2px] text-right leading-[20px] text-white">Msgs</div>
              <HeaderRule />
              <div className="flex-1 bg-[#808080] pt-[3px] text-white">
                {SIGNALS.map((s) => (
                  <div key={s.name} className="h-[19px] pl-[2px]">{s.value}</div>
                ))}
                <div className="mr-[3px] ml-[2px] h-px bg-black" />
              </div>
            </div>
            <div className="w-[3px] shrink-0 border-l border-[#999] bg-white" />

            {/* waveforms */}
            <div className="flex min-w-0 flex-1 flex-col overflow-hidden bg-black">
              <svg width="1617" height="18" className="block shrink-0" shapeRendering="crispEdges">
                <path d="M927.500 1V18" stroke="#ffcc00" strokeWidth="3" />
              </svg>
              <HeaderRule />
              <Waves />
            </div>

            {/* scroll bar */}
            <div className="flex w-[17px] shrink-0 flex-col border-l border-[#999]">
              <div className="mr-px ml-[2px] h-[18px] shrink-0 bg-[#808080]" />
              <HeaderRule />
              <div className="mr-px ml-[3px] flex-1 border-r border-l border-r-[#999] border-l-[#999] bg-white">
                <button type="button" aria-label="Scroll up" className="flex h-[13px] w-full items-center justify-center border-b border-[#999] bg-[#b8b8b8]">
                  <svg viewBox="0 0 10 11" className="h-[11px] w-[10px]"><path d="M5 0L10 11H0Z" fill="#fff" stroke="#999" strokeWidth=".5" /></svg>
                </button>
              </div>
            </div>
          </main>
        </section>
      </div>

      {/* window behind */}
      <aside className="flex w-3 shrink-0 flex-col">
        <div className="h-[31px] bg-linear-to-r from-[#999] to-[#ccc] pt-1">
          <svg viewBox="0 0 12 18" className="h-[18px] w-3" fill="none">
            <circle cx="-2" cy="9" r="9" fill="#777" />
            <path d="M0 5.500L-3 9L1 13" stroke="#ddd" />
          </svg>
        </div>
        <div className="h-[26px] bg-[#2a2a2a]" />
        <div className="h-[41px] border-b border-[#aaa] bg-linear-to-r from-[#999] to-[#dedede]" />
        <div className="h-[27px] border-b border-[#aaa] bg-linear-to-r from-[#999] to-[#dedede]" />
        <div className="flex-1 bg-linear-to-r from-[#8c8c8c] to-[#d4d4d4]" />
      </aside>
    </div>
  );
}
